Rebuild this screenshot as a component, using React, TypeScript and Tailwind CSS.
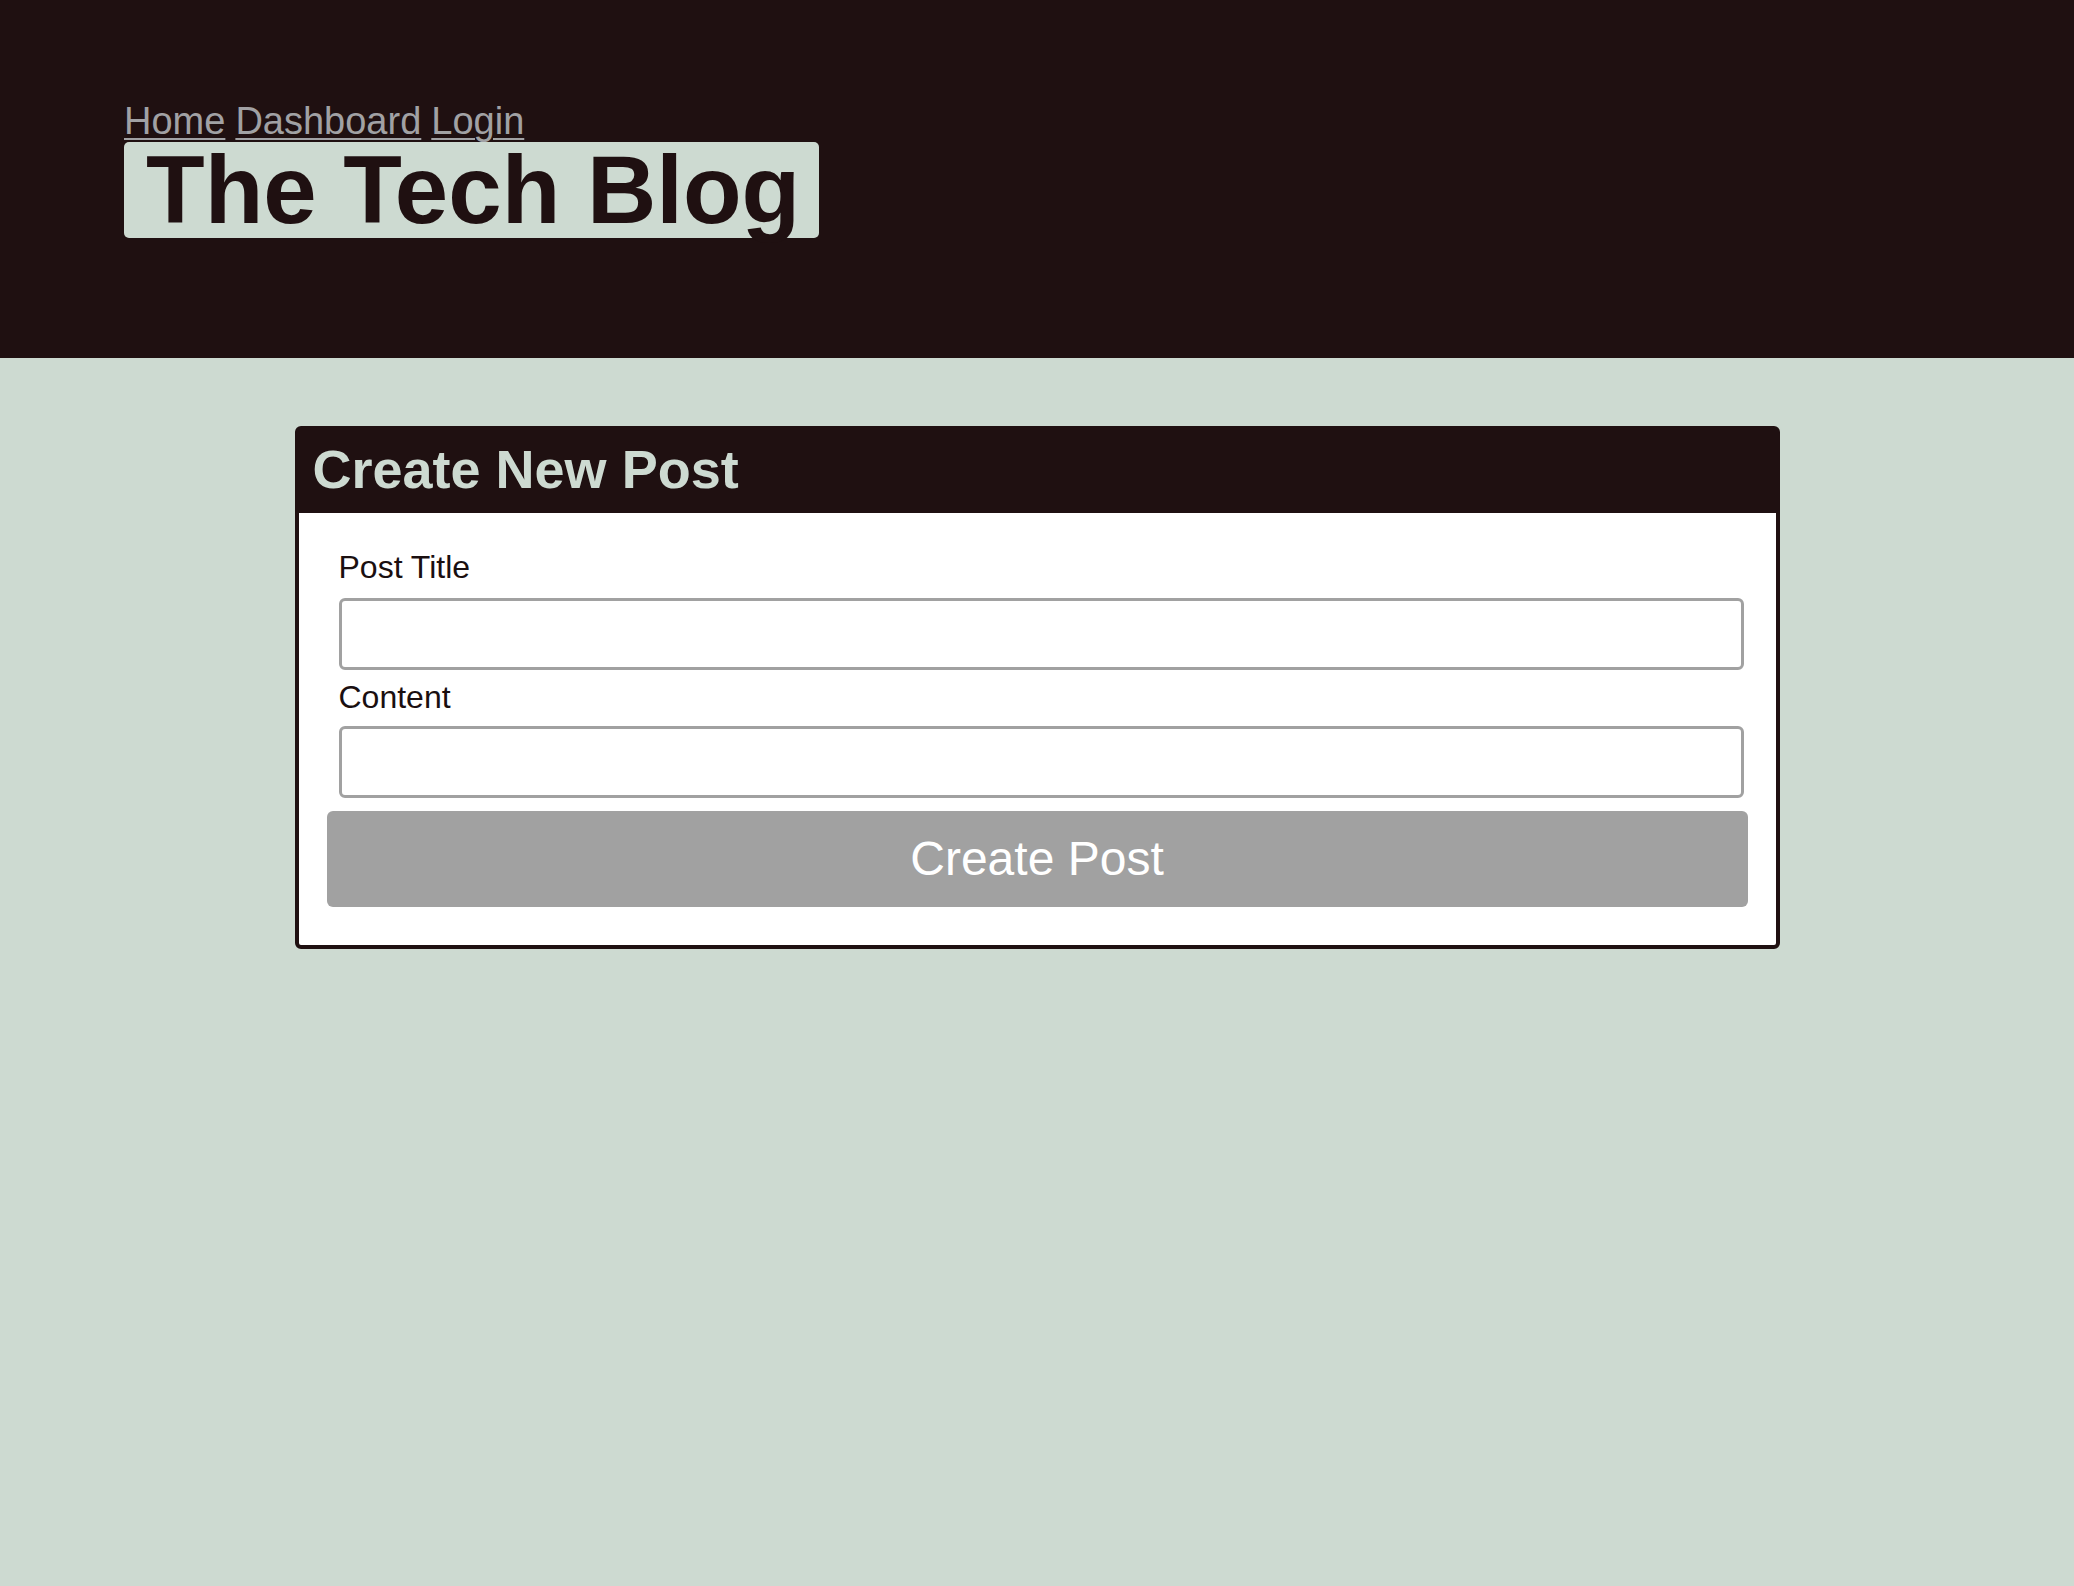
export default function App() {
  const links = ['Home', 'Dashboard', 'Login']

  return (
    <div className="min-h-[1586px] bg-[#cddad1] font-['Liberation_Sans',Arial,sans-serif]">
      <header className="h-[358px] bg-[#1f1011] pl-[124px] pt-[101px]">
        <nav className="flex gap-[10px] text-[38px] leading-[41px]">
          {links.map((l) => (
            <a key={l} href="#" className="text-[#a1a1a4] underline decoration-[2px] underline-offset-[4px]">
              {l}
            </a>
          ))}
        </nav>
        <h1 className="inline-block rounded-[5px] bg-[#cddad1] pl-[22px] pr-[19px] text-[96px] font-bold leading-[96px] text-[#1f1011]">
          The Tech Blog
        </h1>
      </header>

      <main className="pt-[68px]">
        <div className="mx-auto w-[1485px] rounded-[6px] border-4 border-[#1f1011] bg-white">
          <div className="h-[83px] bg-[#1f1011] pl-[14px] pt-[8px]">
            <h2 className="text-[54px] font-bold leading-[62px] text-[#cddad1]">Create New Post</h2>
          </div>
          <form className="flex flex-col px-[28px] pb-[38px] pt-[30px]" onSubmit={(e) => e.preventDefault()}>
            <label htmlFor="title" className="mb-[7px] ml-[12px] text-[32px] text-[#1a0f10]">
              Post Title
            </label>
            <input
              id="title"
              type="text"
              className="mb-[3px] ml-[12px] mr-[4px] h-[72px] rounded-[6px] border-[3px] border-[#a1a1a1] bg-white"
            />
            <label htmlFor="content" className="mb-[5px] ml-[12px] text-[32px] text-[#1a0f10]">
              Content
            </label>
            <input
              id="content"
              type="text"
              className="mb-[13px] ml-[12px] mr-[4px] h-[72px] rounded-[6px] border-[3px] border-[#a1a1a1] bg-white"
            />
            <button
              type="submit"
              className="h-[96px] rounded-[6px] bg-[#a1a1a1] text-[48px] text-white"
            >
              Create Post
            </button>
          </form>
        </div>
      </main>
    </div>
  )
}
